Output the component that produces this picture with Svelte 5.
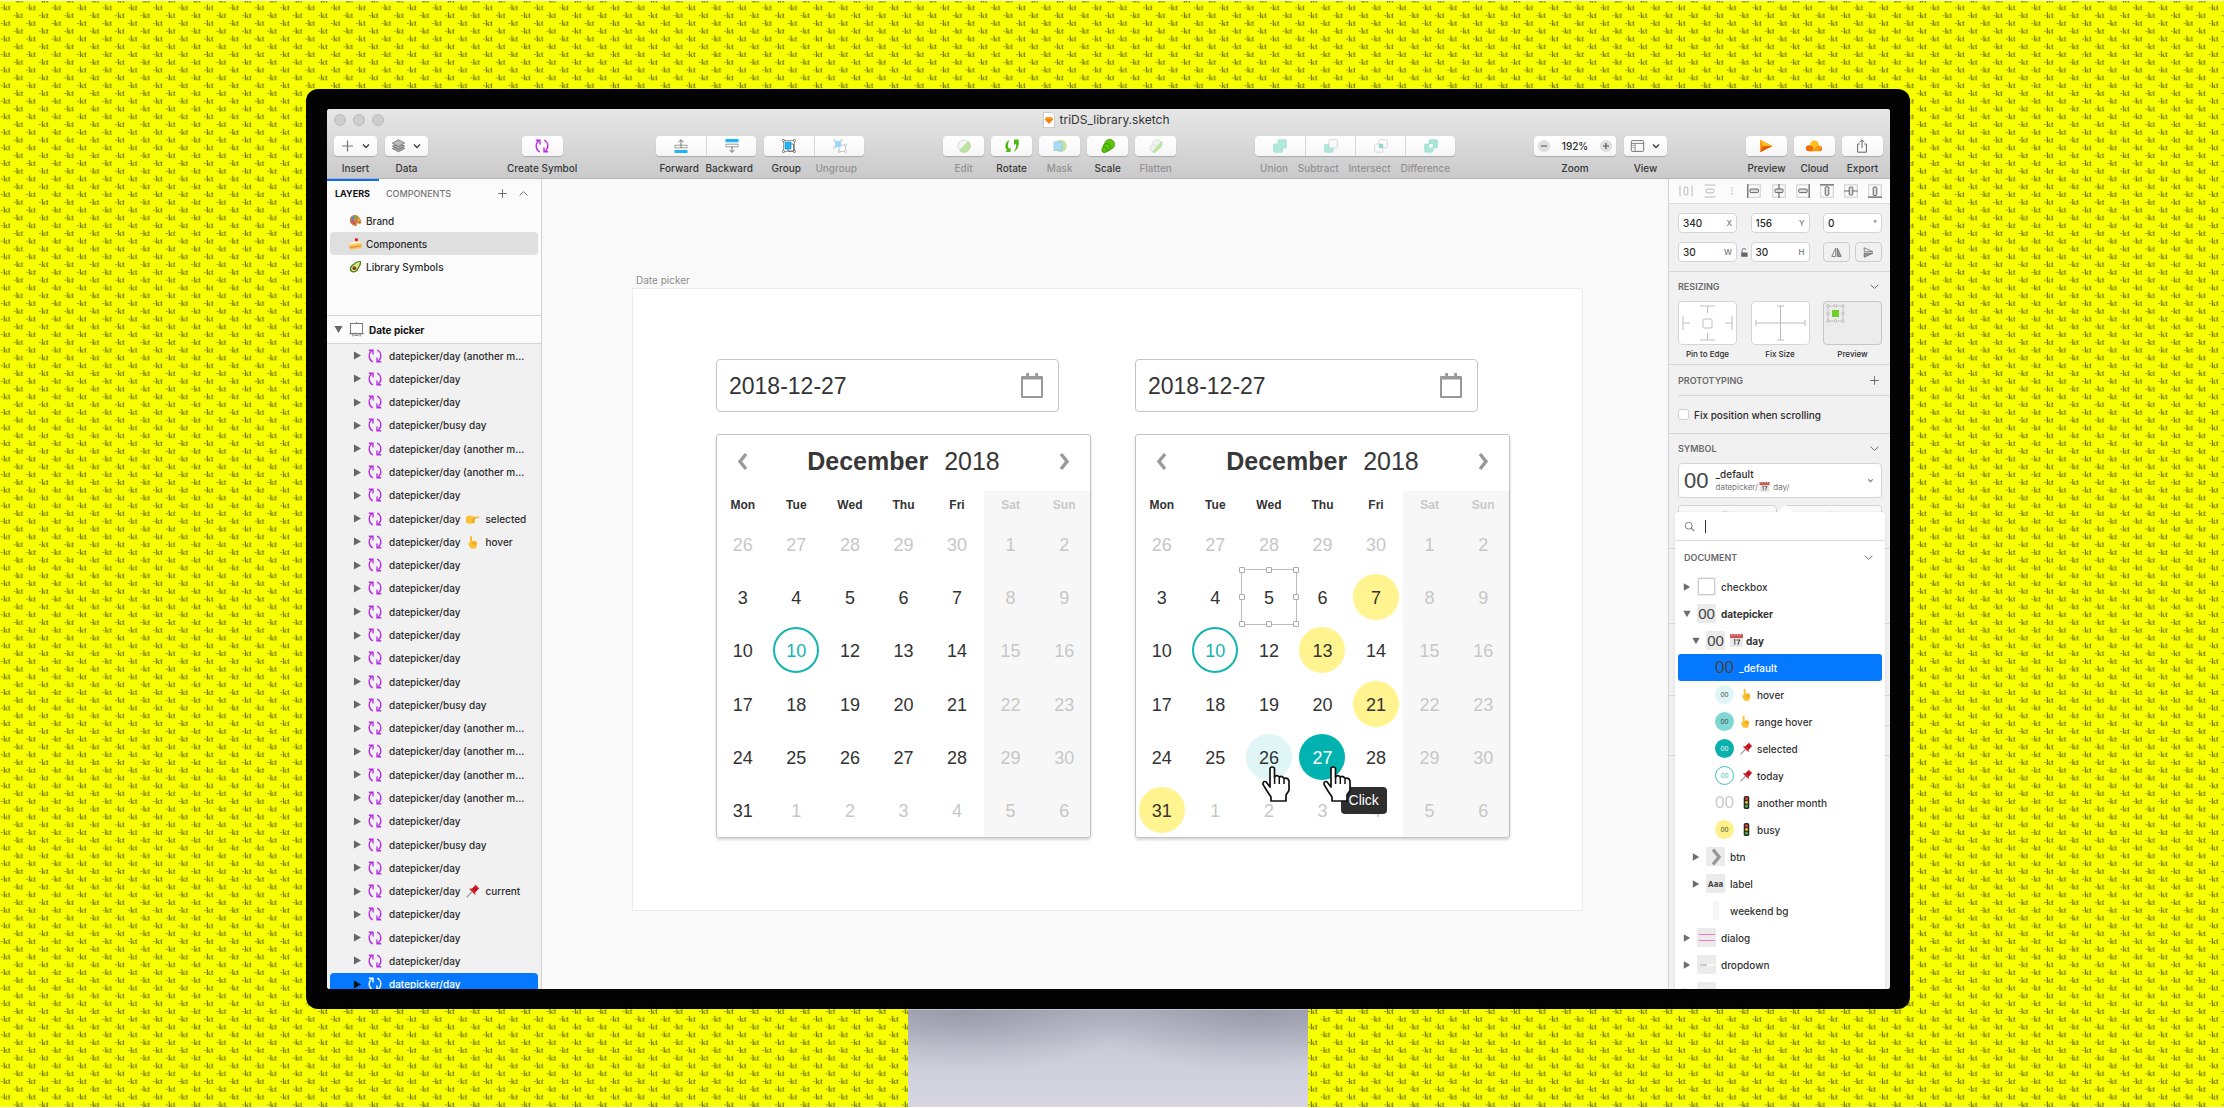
<script>
  const sync =
    '<path d="M4.8 13C.4 10.6 0 4.8 3.8 1.8M.8 1.3H5V5.4M9.200 1C13.600 3.400 14 9.200 10.200 12.200M13.200 12.700H9V8.600" fill="none" stroke="currentColor" stroke-width="1.4"/>';

  const icons = {
    plus: '<path d="M7 1.5V12.5M1.5 7H12.5" fill="none" stroke="currentColor" stroke-width="1.2"/>',
    minus: '<path d="M3.5 7H10.5" fill="none" stroke="currentColor" stroke-width="1.4"/>',
    plusSmall: '<path d="M3.5 7H10.5M7 3.5V10.5" fill="none" stroke="currentColor" stroke-width="1.4"/>',
    down: '<path d="M3.5 5.2L7 8.8L10.5 5.2" fill="none" stroke="currentColor" stroke-width="1.7"/>',
    chevron: '<path d="M2 4.8L7 9.4L12 4.8" fill="none" stroke="currentColor" stroke-width="1.2"/>',
    up: '<path d="M2 9.4L7 4.8L12 9.4" fill="none" stroke="currentColor" stroke-width="1.2"/>',
    right: '<path d="M2.5 1.8L11.5 7L2.500 12.2Z" fill="currentColor"/>',
    open: '<path d="M1.8 2.5H12.2L7 11.500Z" fill="currentColor"/>',
    layers:
      '<g fill="#a5a5a5" stroke="#707070" stroke-width=".8"><path d="M7 6.5L13.2 9.6L7 12.8L.8 9.6Z"/><path d="M7 4L13.2 7.1L7 10.3L.8 7.1Z"/><path d="M7 .8L13.2 4.1L7 7.4L.8 4.1Z" fill="#bbb"/></g>',
    sync,
    forward:
      '<path d="M0.5 11h13v3h-13z" fill="#21b3f3"/><path d="M1 6.2h12v2.6H1z" fill="#fff" stroke="#888" stroke-width=".8"/><path d="M7 9V1M4.5 3.2L7 .6L9.5 3.2" fill="none" stroke="#666" stroke-width=".9"/>',
    backward:
      '<path d="M0.5 0h13v3.2h-13z" fill="#21b3f3"/><path d="M1 5.2h12v2.6H1z" fill="#fff" stroke="#888" stroke-width=".8"/><path d="M7 7.5V13M4.5 11L7 13.5L9.5 11" fill="none" stroke="#666" stroke-width=".9"/>',
    group:
      '<path d="M1.5 1.5h11v11h-11z" fill="none" stroke="#777" stroke-width=".7"/><path d="M6 5h5.5v7H6z" fill="#fff" stroke="#555" stroke-width=".8"/><path d="M3 3h6v7H3z" fill="#21b3f3" stroke="#0c86c4" stroke-width=".6"/><g fill="#fff" stroke="#555" stroke-width=".8"><circle cx="1.5" cy="1.5" r="1.1"/><circle cx="12.5" cy="1.5" r="1.1"/><circle cx="1.5" cy="12.5" r="1.1"/><circle cx="12.5" cy="12.5" r="1.1"/></g>',
    ungroup:
      '<g opacity=".45"><path d="M6 6h6.5v6.5H6z" fill="none" stroke="#777" stroke-width=".8"/><path d="M2 2h6v6H2z" fill="#21b3f3"/><g fill="#fff" stroke="#777" stroke-width=".8"><circle cx="1.5" cy="1.5" r="1"/><circle cx="8.5" cy="1.5" r="1"/><circle cx="1.5" cy="8.5" r="1"/><circle cx="12.5" cy="6" r="1"/><circle cx="12.5" cy="12.5" r="1"/><circle cx="6" cy="12.5" r="1"/></g></g>',
    edit: '<circle cx="7" cy="7" r="6" fill="#f4f4f4" stroke="#d2d2d2" stroke-width=".8"/><path d="M11.4 2.6A6.2 6.2 0 0 1 2.6 11.4Z" fill="#bfe6a3" stroke="#a7d289" stroke-width=".7"/>',
    rotate:
      '<path d="M4.6 1.2C.4 2.2-1 8.2 2 11L.6 13H5.6V8.6L4.2 9.8C2.2 8 2.6 4 4.6 1.2Z" fill="#4fb812"/><path d="M9 .6H13.4C14.6 5 13.4 10 8.8 13C11.2 9.4 11.4 7 11 5L9 5.8Z" fill="#4fb812"/>',
    mask: '<circle cx="7.6" cy="7" r="6.2" fill="#c4e4a4"/><path d="M1 3h8v8.4H1z" fill="#aadcf8" stroke="#8ac4ea" stroke-width=".7"/>',
    scale:
      '<g fill="#5cc705" stroke="#318c03" stroke-width=".8"><circle cx="8.6" cy="5.4" r="4.9"/><circle cx="5.8" cy="8.4" r="3.9"/><circle cx="3.4" cy="11" r="2.6"/></g>',
    flatten:
      '<circle cx="8" cy="5" r="4.3" fill="#f2f2f2" stroke="#d8d8d8" stroke-width=".8"/><circle cx="4.4" cy="9" r="3.4" fill="#f2f2f2" stroke="#d8d8d8" stroke-width=".8"/><path d="M3.6 13L12.6 2.4C14 5 12.6 7.4 10.6 9.4L7.4 12.4C6.2 13.6 4.6 13.8 3.6 13Z" fill="#bfe6a3" stroke="#a9d58c" stroke-width=".6"/>',
    union:
      '<path d="M6 .7h6.5q.9 0 .9.9V8q0 1-1 1H9.5v3.3q0 1-1 1H1.6q-1 0-1-1V6q0-1 1-1H5V1.7q0-1 1-1Z" fill="#b2e8db" stroke="#98dccb" stroke-width=".6"/>',
    subtract:
      '<path d="M.6 5.6h4.2V9h4.4v3.3q0 1-1 1H1.6q-1 0-1-1Z" fill="#b2e8db" stroke="#98dccb" stroke-width=".6"/><rect x="5" y=".7" width="8.4" height="8.2" rx="1" fill="#fafafa" stroke="#d2d2d2" stroke-width=".9"/>',
    intersect:
      '<rect x="5" y=".7" width="8.4" height="8.2" rx="1" fill="none" stroke="#d6d6d6" stroke-width=".9"/><rect x=".6" y="5" width="8.4" height="8.2" rx="1" fill="none" stroke="#d6d6d6" stroke-width=".9"/><path d="M5 5h4v4H5z" fill="#8fdcca"/>',
    difference:
      '<rect x="5" y=".7" width="8.4" height="8.2" rx="1" fill="#a9e4d6" stroke="#98dccb" stroke-width=".6"/><rect x=".6" y="5" width="8.4" height="8.2" rx="1" fill="#a9e4d6" stroke="#98dccb" stroke-width=".6"/><path d="M5.2 5.2h3.6v3.6H5.2z" fill="#fbfbfb"/>',
    view: '<rect x=".8" y="1.6" width="12.4" height="10.8" rx=".8" fill="none" stroke="#777" stroke-width="1"/><path d="M.8 4.4H13.2M4.6 4.4V12.4M2 6.4H3.4M2 8.4H3.4" fill="none" stroke="#777" stroke-width=".9"/>',
    preview:
      '<path d="M1.2 .8L13.4 7L1.2 13.2Z" fill="#f58b0a"/><path d="M1.2 .8L13.4 7L4 7.2Z" fill="#fdbb1c"/><path d="M1.2 13.2L13.4 7L4 7.2Z" fill="#e35d08"/>',
    cloud:
      '<ellipse cx="7.4" cy="6.4" rx="4.4" ry="5" fill="#fdc01f"/><path d="M-1.200 9.4C-1.200 6.800 1 5.800 3.200 6.400C5.800 6.600 7 9 6.600 12.200H1.800C-.2 12.200-1.200 11-1.200 9.400Z" fill="#ef6c0b"/><path d="M2 12.200C5.200 11.800 8 10 8.400 8.400C9.800 6.200 13 6 14.400 7.600C15.800 9.800 14.800 12.200 12.400 12.200Z" fill="#f79a12"/><path d="M12 12.2c2.600 0 3.800-2.600 2.400-4.600c.2 2-.6 3.600-2.400 4.600Z" fill="#de4f07"/>',
    export:
      '<path d="M4.6 5H2.6V13.2H11.4V5H9.4" fill="none" stroke="#666" stroke-width="1"/><path d="M7 9V1M4.6 3.2L7 .8L9.4 3.2" fill="none" stroke="#666" stroke-width="1"/>',
    artboard:
      '<rect x="1.4" y="1.4" width="11.2" height="9.2" fill="#fff" stroke="#777" stroke-width=".9"/><path d="M7 0V1.4M.2 11H13.8M3.6 11V13.4M10.4 11V13.4M5 12.4H9" fill="none" stroke="#777" stroke-width=".9"/>',
    palette:
      '<path d="M1 5C2 1 7 0 10 2.6C13 5 14 9 12.4 10.4C11 11.4 10 9.6 8.8 10C7.6 10.6 9.4 12.6 8 13C4 13 0 9.4 1 5Z" fill="#c98344"/><circle cx="4" cy="4.2" r="1.4" fill="#2d8de0"/><circle cx="7.6" cy="3.6" r="1.3" fill="#51b848"/><circle cx="10.4" cy="6.2" r="1.2" fill="#f4c51e"/><circle cx="3.6" cy="7.4" r="1.3" fill="#9a45c4"/><circle cx="5.4" cy="10" r="1.2" fill="#e0392f"/>',
    cake: '<path d="M.6 6.600L10 3.600L13.400 6.200V12L.6 13.600Z" fill="#f6c667"/><path d="M.6 6.600L10 3.200L13.400 6.200L.6 8.400Z" fill="#fff1d2"/><path d="M.6 10.200L13.400 8.800V10.400L.6 12Z" fill="#e89a2b"/><circle cx="8" cy="3" r="1.8" fill="#d8232a"/>',
    avocado:
      '<path d="M12.8 1C8.600 .6 6.800 2.600 4 4.600C.6 7 0 10.400 2 12.400C4.400 14.400 8.800 13.400 10.200 9.800C11.400 6.600 13.800 5.400 12.800 1Z" fill="#4c7a1f"/><path d="M11.600 2C8.800 2.200 7.200 4 5 5.600C2.200 7.400 1.600 10 3.200 11.400C5 12.800 8 11.800 9 9.200C10 6.400 12 5 11.600 2Z" fill="#e4ea8b"/><circle cx="5.800" cy="8.800" r="2.100" fill="#7a4219"/>',
    pointRight:
      '<path d="M0 5.4C2 3.4 4.6 3 6.2 4.4H13Q14 5.2 13 6.2H8.6V10.4Q7.6 12 5.6 11.4H3.4Q2 11.4 0 10.4Z" fill="#fcbf31"/><path d="M6 8h3M6 9.8h2.8M7 6.3h3" stroke="#d98d12" stroke-width=".7"/>',
    pointUp:
      '<path d="M4 1.200Q5 .2 6 1.200V6Q9 5.200 11 7V10Q10.400 12.600 9.400 13.600H4.800Q3.600 11.600 2.400 9.600V8Q3 7 4 8Z" fill="#fcbf31"/><path d="M7.4 7v2.4M9.2 7.2v2.4" stroke="#d98d12" stroke-width=".7"/>',
    pin: '<path d="M.6 13.4L6 7.6" stroke="#8c9298" stroke-width="1.1"/><path d="M9.4 .6L13.4 4.6L11.8 5.4L9.6 7.8L9.2 11L3 4.8L6.2 4.4L8.6 2.2Z" fill="#dc2430"/><path d="M8.6 2.2L11.8 5.4L9.6 7.8L6.2 4.4Z" fill="#b3141f"/>',
    light:
      '<rect x="4" y="0" width="6" height="14" rx="2" fill="#2b2b2b"/><circle cx="7" cy="3" r="1.6" fill="#ef4136"/><circle cx="7" cy="7" r="1.6" fill="#f7b924"/><circle cx="7" cy="11" r="1.6" fill="#42b549"/>',
    lock: '<path d="M3 7H12V13H3Z" fill="#666"/><path d="M4.4 7V4Q4.6 1.4 7 1.4T9.6 3.6" fill="none" stroke="#666" stroke-width="1.2"/>',
    flipH: '<path d="M6 1.5V12H1Z" fill="none" stroke="#666" stroke-width="1"/><path d="M8 1.5V12H13Z" fill="#999" stroke="#666" stroke-width="1"/>',
    flipV: '<path d="M1.5 6V1L12.5 6Z" fill="none" stroke="#666" stroke-width="1"/><path d="M1.5 8V13L12.5 8Z" fill="#999" stroke="#666" stroke-width="1"/>',
    search: '<circle cx="6" cy="6" r="4.4" fill="none" stroke="currentColor" stroke-width="1.2"/><path d="M9.2 9.2L13 13" stroke="currentColor" stroke-width="1.4"/>',
    prev: '<path d="M10 -.5L4 7L10 14.500" fill="none" stroke="currentColor" stroke-width="3.400"/>',
    next: '<path d="M4 -.5L10 7L4 14.500" fill="none" stroke="currentColor" stroke-width="3.400"/>',
    distH: '<path d="M1 1.5V12.5M13 1.5V12.5" stroke="#bbb"/><rect x="5.2" y="3" width="3.6" height="8" rx="1" fill="none" stroke="#bbb"/>',
    distV: '<path d="M1.5 1H12.5M1.5 13H12.5" stroke="#bbb"/><rect x="3" y="5.2" width="8" height="3.6" rx="1" fill="none" stroke="#bbb"/>',
    dots: '<path d="M7 2V12" stroke="#888" stroke-width="1.4" stroke-dasharray="1.4 2.6"/>',
    alignL: '<rect x=".8" y=".8" width="12.4" height="12.4" fill="none" stroke="#ccc"/><path d="M.8 0V14" stroke="#666" stroke-width="1.2"/><rect x="3" y="5" width="8.4" height="3.6" rx=".8" fill="#ddd" stroke="#666"/>',
    alignC: '<rect x=".8" y=".8" width="12.4" height="12.4" fill="none" stroke="#ccc"/><path d="M7 0V14" stroke="#666" stroke-width="1.2"/><rect x="3" y="5" width="8" height="3.6" rx=".8" fill="#ddd" stroke="#666"/>',
    alignR: '<rect x=".8" y=".8" width="12.4" height="12.4" fill="none" stroke="#ccc"/><path d="M13.2 0V14" stroke="#666" stroke-width="1.2"/><rect x="2.8" y="5" width="8.4" height="3.6" rx=".8" fill="#ddd" stroke="#666"/>',
    alignT: '<rect x=".8" y=".8" width="12.4" height="12.4" fill="none" stroke="#ccc"/><path d="M0 .8H14" stroke="#666" stroke-width="1.2"/><rect x="5.2" y="2.8" width="3.6" height="8.4" rx=".8" fill="#ddd" stroke="#666"/>',
    alignM: '<rect x=".8" y=".8" width="12.4" height="12.4" fill="none" stroke="#ccc"/><path d="M0 7H14" stroke="#666" stroke-width="1.2"/><rect x="5.2" y="3" width="3.6" height="8" rx=".8" fill="#ddd" stroke="#666"/>',
    alignB: '<rect x=".8" y=".8" width="12.4" height="12.4" fill="none" stroke="#ccc"/><path d="M0 13.2H14" stroke="#666" stroke-width="1.2"/><rect x="5.2" y="3" width="3.6" height="8.4" rx=".8" fill="#ddd" stroke="#666"/>',
    detach: '<path d="M2 3L5 9M5 3L2 9M7 10Q8 4 10 4T12 7" fill="none" stroke="#777" stroke-width="1.1"/>',
    master: '<path d="M2 4H7M7 4L2 10M5 4V8M9 4L12 9" fill="none" stroke="#777" stroke-width="1.1"/>',
    doc: '<path d="M1.500 -.5H9.400L12.500 2.600V14.500H1.500Z" fill="#fff" stroke="#bbb" stroke-width=".7"/><path d="M4.200 4H9.800L11.200 6.200L7 10.800L2.800 6.200Z" fill="#f9a01b"/><path d="M2.800 6.200H11.200L7 10.800Z" fill="#f47b0c"/>',
    cal: '<rect x="0" y="1" width="14" height="13" fill="#e9e9ea"/><path d="M0 0H14V4.4H0Z" fill="#c8564f"/><path d="M2 0V2M5 0V2M8 0V2M11 0V2" stroke="#efdcda" stroke-width=".8"/><path d="M4 6.6L5.2 6V11.6M7 6.4H10.4L8.4 11.6" fill="none" stroke="#444" stroke-width="1.1"/>',
    calendar: '<path d="M1 4H21V24H1Z" fill="none" stroke="#999" stroke-width="2" stroke-linejoin="round"/><path d="M1 3H21V6.500H1ZM5.200 0H8V4H5.200ZM14.200 0H17V4H14.200Z" fill="#999"/>',
    hand: '<path d="M8 21V3Q8 1 10.2 1T12.5 3V11Q15 8.4 17.2 11Q20 9.4 22 12.4Q26 11.4 27 15V24.5L24 29V35H9V31L5 25L1 18.4Q.8 14.6 4 15.8Z" fill="#fff" stroke="#111" stroke-width="1.7" stroke-linejoin="round"/><path d="M12.6 10V18M17.3 11V18M22 12.6V18" stroke="#111" stroke-width="1.5"/>'
  };

  const toolbar = [
    [
      { seg: [{ icon: 'plus', menu: true, label: 'Insert' }] },
      { seg: [{ icon: 'layers', menu: true, label: 'Data' }] }
    ],
    [{ seg: [{ icon: 'sync', label: 'Create Symbol', tint: true }] }],
    [
      { wide: true, seg: [{ icon: 'forward', label: 'Forward' }, { icon: 'backward', label: 'Backward' }] },
      { wide: true, seg: [{ icon: 'group', label: 'Group' }, { icon: 'ungroup', label: 'Ungroup', off: true }] }
    ],
    [
      { seg: [{ icon: 'edit', label: 'Edit', off: true }] },
      { seg: [{ icon: 'rotate', label: 'Rotate' }] },
      { seg: [{ icon: 'mask', label: 'Mask', off: true }] },
      { seg: [{ icon: 'scale', label: 'Scale' }] },
      { seg: [{ icon: 'flatten', label: 'Flatten', off: true }] }
    ],
    [
      {
        wide: true,
        seg: [
          { icon: 'union', label: 'Union', off: true },
          { icon: 'subtract', label: 'Subtract', off: true },
          { icon: 'intersect', label: 'Intersect', off: true },
          { icon: 'difference', label: 'Difference', off: true }
        ]
      }
    ],
    [{ zoom: true }, { seg: [{ icon: 'view', menu: true, label: 'View' }] }],
    [
      { seg: [{ icon: 'preview', label: 'Preview' }] },
      { seg: [{ icon: 'cloud', label: 'Cloud' }] },
      { seg: [{ icon: 'export', label: 'Export' }] }
    ]
  ];

  const pages = [
    { icon: 'palette', name: 'Brand' },
    { icon: 'cake', name: 'Components', current: true },
    { icon: 'avocado', name: 'Library Symbols' }
  ];

  const day = { name: 'datepicker/day' };
  const other = { name: 'datepicker/day (another m...' };
  const busy = { name: 'datepicker/busy day' };
  const layers = [
    other, day, day, busy, other, other, day,
    { ...day, icon: 'pointRight', state: 'selected' },
    { ...day, icon: 'pointUp', state: 'hover' },
    day, day, day, day, day, day, busy,
    other, other, other, other, day, busy, day,
    { ...day, icon: 'pin', state: 'current' },
    day, day, day,
    { ...day, active: true }
  ];

  const weekdays = ['Mon', 'Tue', 'Wed', 'Thu', 'Fri', 'Sat', 'Sun'];
  const weeks = [
    [26, 27, 28, 29, 30, 1, 2],
    [3, 4, 5, 6, 7, 8, 9],
    [10, 10, 12, 13, 14, 15, 16],
    [17, 18, 19, 20, 21, 22, 23],
    [24, 25, 26, 27, 28, 29, 30],
    [31, 1, 2, 3, 4, 5, 6]
  ];
  const pickers = [
    { id: 'plain', marks: { '2-1': 'today' } },
    {
      id: 'marked',
      marks: { '2-1': 'today', '1-4': 'busy', '2-3': 'busy', '3-4': 'busy', '5-0': 'busy', '4-2': 'hover', '4-3': 'chosen' },
      selection: '1-2'
    }
  ];
  const muted = (w, d) => d > 4 || w === 0 || (w === 5 && d > 0);

  const aligns = ['distH', 'distV', 'dots', 'alignL', 'alignC', 'alignR', 'alignT', 'alignM', 'alignB'];

  const symbols = [
    { level: 0, arrow: 'right', thumb: 'box', name: 'checkbox' },
    { level: 0, arrow: 'open', thumb: 'digits', name: 'datepicker', bold: true },
    { level: 1, arrow: 'open', thumb: 'digits', icon: 'cal', name: 'day', bold: true },
    { level: 2, thumb: 'digits bare', name: '_default', active: true },
    { level: 2, thumb: 'dot pale', icon: 'pointUp', name: 'hover', spaced: true },
    { level: 2, thumb: 'dot mid', icon: 'pointUp', name: 'range hover' },
    { level: 2, thumb: 'dot full', icon: 'pin', name: 'selected', spaced: true },
    { level: 2, thumb: 'dot ring', icon: 'pin', name: 'today', spaced: true },
    { level: 2, thumb: 'digits bare faint', icon: 'light', name: 'another month', spaced: true },
    { level: 2, thumb: 'dot sun', icon: 'light', name: 'busy', spaced: true },
    { level: 1, arrow: 'right', thumb: 'next', name: 'btn' },
    { level: 1, arrow: 'right', thumb: 'text', name: 'label' },
    { level: 1, thumb: 'strip', name: 'weekend bg' },
    { level: 0, arrow: 'right', thumb: 'lines', name: 'dialog' },
    { level: 0, arrow: 'right', thumb: 'dash', name: 'dropdown' },
    { level: 0, arrow: 'right', thumb: 'dash', name: '' }
  ];
</script>

{#snippet glyph(name, cls = '', box = '0 0 14 14')}
  <svg class="glyph {cls}" viewBox={box} aria-hidden="true">{@html icons[name]}</svg>
{/snippet}

<div class="stage">
  <svg class="wall" aria-hidden="true">
    <defs>
      <pattern id="kt" y="2.5" width="25.38" height="15.56" patternUnits="userSpaceOnUse">
        <text x="0.6" y="6.6">-kt</text>
        <text x="13.3" y="14.4">-kt</text>
      </pattern>
    </defs>
    <rect width="100%" height="100%" fill="#f8ff00" />
    <rect width="100%" height="100%" fill="url(#kt)" />
  </svg>

  <div class="monitor">
    <div class="screen">
      <header class="toolbar">
        <div class="titlebar">
          <div class="lights"><i></i><i></i><i></i></div>
          <div class="title">{@render glyph('doc')}<span>triDS_library.sketch</span></div>
        </div>
        <div class="tools">
          {#each toolbar as cluster}
            <div class="cluster">
              {#each cluster as tool}
                {#if tool.zoom}
                  <div class="tool">
                    <div class="seg zoom">
                      <button aria-label="Zoom out">{@render glyph('minus', 'round')}</button>
                      <span class="value">192%</span>
                      <button aria-label="Zoom in">{@render glyph('plusSmall', 'round')}</button>
                    </div>
                    <div class="caps"><span>Zoom</span></div>
                  </div>
                {:else}
                  <div class="tool">
                    <div class="seg" class:wide={tool.wide}>
                      {#each tool.seg as b}
                        <button class:menu={b.menu} class:tint={b.tint} aria-label={b.label} disabled={b.off}>
                          {@render glyph(b.icon)}
                          {#if b.menu}{@render glyph('down', 'arrow')}{/if}
                        </button>
                      {/each}
                    </div>
                    <div class="caps">
                      {#each tool.seg as b}<span class:off={b.off}>{b.label}</span>{/each}
                    </div>
                  </div>
                {/if}
              {/each}
            </div>
          {/each}
        </div>
      </header>

      <div class="workspace">
        <aside class="sidebar">
          <div class="track"><div class="progress"></div></div>
          <div class="tabs">
            <button class="tab on">LAYERS</button>
            <button class="tab">COMPONENTS</button>
            <span class="grow"></span>
            <button aria-label="Add page">{@render glyph('plus', 'small')}</button>
            <button aria-label="Collapse pages">{@render glyph('up', 'small')}</button>
          </div>
          <ul class="pages">
            {#each pages as p}
              <li class:current={p.current}>{@render glyph(p.icon)}<span>{p.name}</span></li>
            {/each}
          </ul>
          <div class="board">
            {@render glyph('open', 'tri')}{@render glyph('artboard', 'frame')}<span>Date picker</span>
          </div>
          <ul class="layers">
            {#each layers as l}
              <li class:active={l.active}>
                {@render glyph('right', 'tri')}{@render glyph('sync', 'sync')}
                <span>{l.name}</span>
                {#if l.icon}{@render glyph(l.icon, 'emoji')}<span>{l.state}</span>{/if}
              </li>
            {/each}
          </ul>
        </aside>

        <main class="canvas">
          <h1>Date picker</h1>
          <div class="artboard">
            {#each pickers as p}
              <section class="picker">
                <div class="field">
                  <input type="text" value="2018-12-27" aria-label="Date, {p.id}" />
                  {@render glyph('calendar', 'calendar', '0 0 22 25')}
                </div>
                <div class="month">
                  <div class="head">
                    <button aria-label="Previous month">{@render glyph('prev')}</button>
                    <h2>December <span>2018</span></h2>
                    <button aria-label="Next month">{@render glyph('next')}</button>
                  </div>
                  <table>
                    <thead>
                      <tr>{#each weekdays as d, i}<th class:weekend={i > 4}>{d}</th>{/each}</tr>
                    </thead>
                    <tbody>
                      {#each weeks as week, w}
                        <tr>
                          {#each week as d, i}
                            {@const mark = p.marks[`${w}-${i}`]}
                            <td class:weekend={i > 4} class:muted={muted(w, i)}>
                              <span class="day {mark ?? ''}">{d}</span>
                              {#if p.selection === `${w}-${i}`}
                                <span class="selection">
                                  {#each Array(9) as _, h}<i class:hidden={h === 4}></i>{/each}
                                </span>
                              {/if}
                              {#if mark === 'chosen'}<span class="tip">Click</span>{/if}
                              {#if mark === 'hover' || mark === 'chosen'}
                                {@render glyph('hand', `hand ${mark}-hand`, '0 0 28 36')}
                              {/if}
                            </td>
                          {/each}
                        </tr>
                      {/each}
                    </tbody>
                  </table>
                </div>
              </section>
            {/each}
          </div>
        </main>

        <aside class="inspector">
          <div class="aligns">
            {#each aligns as a}
              {#if a === 'dots'}{@render glyph(a, 'dots')}{:else}<button aria-label={a}>{@render glyph(a)}</button>{/if}
            {/each}
          </div>
          <section class="geometry">
            <label><input value="340" /><span>X</span></label>
            <label><input value="156" /><span>Y</span></label>
            <label><input value="0" /><span>°</span></label>
            <label><input value="30" /><span>W</span></label>
            <label>{@render glyph('lock', 'lock')}<input value="30" /><span>H</span></label>
            <div class="flips">
              <button aria-label="Flip horizontally">{@render glyph('flipH')}</button>
              <button aria-label="Flip vertically">{@render glyph('flipV')}</button>
            </div>
          </section>
          <section class="resizing">
            <div class="caption"><h3>RESIZING</h3>{@render glyph('chevron', 'small')}</div>
            <div class="boxes">
              <figure>
                <svg viewBox="0 0 59 44" aria-hidden="true"><path d="M22 5H37M29.500 5V12M22 39H37M29.500 32V39M5 15V29M5 22H12M54 15V29M47 22H54" /><rect x="25" y="18" width="9" height="9" rx="1" /></svg>
                <figcaption>Pin to Edge</figcaption>
              </figure>
              <figure>
                <svg viewBox="0 0 59 44" aria-hidden="true"><path d="M5 22H54M29.500 5V39M5 19V25M54 19V25M26 5H33M26 39H33" /></svg>
                <figcaption>Fix Size</figcaption>
              </figure>
              <figure class="shown">
                <svg viewBox="0 0 59 44" aria-hidden="true">
                  <path d="M5 5H20V20H5Z" />
                  <rect x="9" y="9" width="7" height="7" class="green" />
                  <g class="knobs"><circle cx="5" cy="5" r="1.300" /><circle cx="12.500" cy="5" r="1.300" /><circle cx="20" cy="5" r="1.300" /><circle cx="5" cy="12.500" r="1.300" /><circle cx="20" cy="12.500" r="1.300" /><circle cx="5" cy="20" r="1.300" /><circle cx="12.500" cy="20" r="1.300" /><circle cx="20" cy="20" r="1.300" /></g>
                </svg>
                <figcaption>Preview</figcaption>
              </figure>
            </div>
          </section>
          <section class="proto">
            <div class="caption"><h3>PROTOTYPING</h3>{@render glyph('plus', 'small')}</div>
            <label class="check"><input type="checkbox" /><span>Fix position when scrolling</span></label>
          </section>
          <section class="symbol">
            <div class="caption"><h3>SYMBOL</h3>{@render glyph('chevron', 'small')}</div>
            <button class="combo">
              <span class="big">00</span>
              <span class="names"><b>_default</b><small>datepicker/{@render glyph('cal')} day/</small></span>
              {@render glyph('down', 'arrow')}
            </button>
            <div class="pair">
              <button aria-label="Detach symbol">{@render glyph('detach')}</button>
              <button aria-label="Edit master">{@render glyph('master')}</button>
            </div>
          </section>
          <div class="rest"><i></i><i></i><i class="inset"></i><i></i></div>

          <div class="popover">
            <div class="search">{@render glyph('search')}<span class="bar"></span><input type="search" aria-label="Search symbols" /></div>
            <div class="caption"><h3>DOCUMENT</h3>{@render glyph('chevron', 'small')}</div>
            <ul>
              {#each symbols as s}
                <li class="level{s.level}" class:active={s.active} class:bold={s.bold}>
                  <span class="twist">{#if s.arrow}{@render glyph(s.arrow)}{/if}</span>
                  <span class="thumb {s.thumb}">
                    {#if s.thumb.startsWith('digits') || s.thumb.startsWith('dot')}00{:else if s.thumb === 'text'}Aaa{:else if s.thumb === 'next'}{@render glyph('next')}{/if}
                  </span>
                  {#if s.icon}<span class="mark" class:spaced={s.spaced}>{@render glyph(s.icon)}</span>{/if}
                  <span>{s.name}</span>
                </li>
              {/each}
            </ul>
          </div>
        </aside>
      </div>
    </div>
  </div>
  <div class="stand"></div>
</div>

<style>
  :global(*) { box-sizing: border-box; }
  :global(body) { margin: 0; }

  .stage {
    position: relative;
    display: flex;
    flex-direction: column;
    height: 100vh;
    padding: 88px 314px 0 306px;
    font-family: Inter, 'Liberation Sans', sans-serif;
    font-size: 10px;
    font-weight: 500;
    color: #2b2b2b;
    border-top: 1px solid #fdfde8;
    border-bottom: 1px solid #fdfde8;
    overflow: hidden;
  }
  .wall { position: absolute; inset: 0; width: 100%; height: 100%; }
  .wall text { font: bold 8px 'Liberation Serif', serif; fill: #6f7600; }

  button { font: inherit; color: inherit; padding: 0; border: 0; background: none; display: flex; align-items: center; justify-content: center; }
  input { font: inherit; color: inherit; border: 0; outline: 0; background: none; padding: 0; margin: 0; min-width: 0; }
  ul { list-style: none; margin: 0; padding: 0; }
  h1, h2, h3, figure { margin: 0; font-size: inherit; }
  .glyph { width: 14px; height: 14px; flex: none; overflow: visible; }
  .glyph.small { width: 11px; height: 11px; color: #666; }
  .grow { flex: 1; }

  .monitor { position: relative; flex: 1; min-height: 0; display: flex; padding: 20px 20px 20px 21px; background: #030304; border-radius: 12px; }
  .stand {
    position: relative; align-self: center; flex: none; width: 400px; height: 98px;
    border-top: 1px solid #c6c6d2;
    background:
      radial-gradient(180px 60px at 14% 0, rgba(120, 120, 140, .45), transparent),
      radial-gradient(180px 60px at 88% 0, rgba(120, 120, 140, .45), transparent),
      linear-gradient(#b3b4c1, #cacbd6 40%, #d6d7e2);
  }
  .screen { flex: 1; min-width: 0; display: flex; flex-direction: column; overflow: hidden; border-radius: 3px; background: #f9f9f9; }

  .toolbar { flex: none; height: 70px; background: linear-gradient(#e7e7e7, #cacaca); border-bottom: 1px solid #b2b2b2; }
  .titlebar { position: relative; display: flex; align-items: center; justify-content: center; height: 21px; }
  .lights { position: absolute; left: 7px; display: flex; gap: 7px; }
  .lights i { width: 12px; height: 12px; border-radius: 50%; background: #cdcdcd; border: 1px solid #bbb; }
  .title { display: flex; align-items: center; gap: 4px; padding-right: 6px; font-size: 12px; font-weight: 400; color: #333; }
  .tools { display: flex; justify-content: space-between; padding: 6px 7px 0; }
  .cluster { display: flex; gap: 8px; }
  .tool { display: flex; flex-direction: column; align-items: center; gap: 5px; }
  .seg { display: flex; height: 20px; background: linear-gradient(#fff, #f6f6f6); border-radius: 4px; box-shadow: 0 1px 1px rgba(0, 0, 0, .2); }
  .seg button { width: 41px; }
  .seg.wide button { width: 50px; }
  .seg button + button { border-left: 1px solid #d8d8d8; }
  .seg .menu { width: 43px; gap: 5px; }
  .seg .menu .glyph:first-child { width: 15px; color: #777; }
  .seg .arrow { width: 12px; height: 12px; color: #444; }
  .tint { color: #bd2fe6; }
  .seg.zoom { width: 82px; padding: 0 4px; align-items: center; justify-content: space-between; }
  .seg.zoom button { width: 12px; height: 12px; border: 0; border-radius: 50%; background: #dedede; }
  .value { font-size: 10px; }
  .round { width: 12px; height: 12px; color: #555; }
  .caps { display: flex; justify-content: space-around; align-self: stretch; height: 14px; line-height: 14px; font-size: 10px; color: #383838; white-space: nowrap; }
  .caps .off { color: #929292; }
  .cluster:nth-child(4) .tool, .cluster:nth-child(7) .tool { width: 41px; }
  .cluster:nth-child(4), .cluster:nth-child(7) { gap: 7px; }

  .workspace { flex: 1; min-height: 0; display: grid; grid-template-columns: 215px minmax(0, 1fr) 222px; }

  .sidebar { display: flex; flex-direction: column; min-height: 0; background: #f1f1f1; border-right: 1px solid #d2d2d2; }
  .track { flex: none; background: #fbfbfb; }
  .progress { width: 52px; height: 2px; background: #0a6cff; }
  .tabs { display: flex; align-items: center; gap: 10px; height: 28px; padding: 0 12px 3px 8px; background: #fbfbfb; }
  .tab { color: #777; font-size: 9px; margin-right: 6px; }
  .tab.on { color: #111; font-weight: 700; }
  .pages { height: 107px; background: #fbfbfb; border-bottom: 1px solid #d4d4d4; }
  .pages li { display: flex; align-items: center; gap: 4px; height: 23px; margin: 0 3px; padding-left: 19px; border-radius: 4px; }
  .pages .glyph { width: 13px; height: 13px; }
  .pages .current { background: #dfdfdf; }
  .board { display: flex; align-items: center; gap: 5px; flex: none; height: 28px; padding-left: 6px; background: #fbfbfb; border-bottom: 1px solid #d4d4d4; font-weight: 700; color: #111; }
  .tri { width: 11px; height: 11px; color: #666; }
  .frame { width: 15px; height: 15px; }
  .layers { flex: 1; display: flex; flex-direction: column; min-height: 0; margin-bottom: -7px; }
  .layers li { flex: 1; display: flex; align-items: center; margin: 0 3px; padding-left: 22px; white-space: nowrap; }
  .layers .sync { width: 14px; color: #b62fe0; margin: 0 7px 0 5px; }
  .layers .emoji { margin: 0 5px 0 6px; width: 14px; height: 14px; }
  .layers .active { background: #0479ff; color: #fff; border-radius: 4px 4px 0 0; }
  .active .sync { color: #fff; }
  .active .tri { color: #111; }

  .canvas { display: flex; flex-direction: column; padding: 93px 85px 78px 90px; background: #f9f9f9; }
  .canvas h1 { height: 16px; line-height: 16px; padding-left: 4px; font-weight: 400; color: #8d8d8d; }
  .artboard { flex: 1; display: flex; gap: 44px; padding: 70px 72px 0 83px; background: #fff; border: 1px solid #ececec; font-family: 'Liberation Sans', Arial, sans-serif; font-weight: 400; color: #333; }
  .picker { flex: 1; min-width: 0; display: flex; flex-direction: column; gap: 22px; }
  .field { display: flex; align-items: center; height: 53px; margin-right: 32px; padding: 0 15px 0 12px; border: 1px solid #c4c4c4; border-radius: 4px; }
  .field input { flex: 1; padding-top: 2px; font-size: 23px; }
  .calendar { width: 22px; height: 25px; }
  .month { border: 1px solid #c4c4c4; border-radius: 3px; box-shadow: 0 2px 3px rgba(0, 0, 0, .16); }
  .head { display: flex; align-items: center; justify-content: space-between; height: 56px; padding: 0 19px 4px; color: #999; }
  .head .glyph { height: 15px; }
  .head h2 { display: flex; gap: 16px; font-size: 25px; color: #383838; }
  .head span { font-weight: 400; }
  table { width: calc(100% + 2px); height: 346px; margin: 0 -1px; table-layout: fixed; border-collapse: collapse; }
  th, td { padding: 0; text-align: center; }
  th { height: 26px; padding-top: 2px; font-size: 12px; }
  td { position: relative; font-size: 18px; }
  .weekend { background: rgba(0, 0, 0, .03); color: #c9c9c9; }
  .muted { color: #c7c7c7; }
  .day { display: flex; align-items: center; justify-content: center; width: 46px; height: 46px; margin: 0 auto; padding-top: 3px; border-radius: 50%; }
  .today { border: 2px solid #14b4b0; color: #14b4b0; }
  .busy { background: #fff48f; }
  .hover { background: #e0f6f6; }
  .chosen { background: #00b3b0; color: #fff; }
  .selection { position: absolute; inset: -3px; display: grid; grid-template-columns: repeat(3, 6px); grid-template-rows: repeat(3, 6px); place-content: space-between; }
  .selection::before { content: ''; position: absolute; inset: 2px; border: 1px solid #bdbdbd; }
  .selection i { position: relative; background: #fff; border: 1px solid #aaa; border-radius: 1px; }
  .selection .hidden { visibility: hidden; }
  td :global(.hand) { position: absolute; z-index: 2; top: 36px; left: 20px; width: 28px; height: 36px; }
  td :global(.chosen-hand) { left: 27px; }
  .tip { position: absolute; z-index: 1; left: 45px; top: 57px; width: 46px; height: 27px; line-height: 27px; font-size: 14px; color: #fff; background: #2e2e2e; border-radius: 4px; }

  .inspector { position: relative; min-height: 0; overflow: hidden; background: #f1f1f1; border-left: 1px solid #d2d2d2; }
  .aligns { display: flex; align-items: center; justify-content: space-between; height: 25px; padding: 0 8px 0 10px; background: #fbfbfb; border-bottom: 1px solid #dadada; }
  .aligns .dots { width: 10px; }
  section:not(.picker) { border-bottom: 1px solid #d6d6d6; padding: 0 8px 0 9px; }
  .inspector .geometry { display: grid; grid-template-columns: repeat(3, 59px); justify-content: space-between; row-gap: 9px; padding-top: 9px; padding-bottom: 9px; }
  .geometry label { position: relative; display: flex; align-items: center; height: 20px; padding: 0 4px; background: #fff; border: 1px solid #d4d4d4; border-radius: 4px; }
  .geometry input { flex: 1; width: 20px; }
  .geometry label span { font-size: 8px; color: #777; }
  .geometry :global(.lock) { position: absolute; left: -13px; width: 10px; height: 11px; }
  .flips { display: grid; grid-template-columns: 1fr 1fr; gap: 5px; }
  .flips button { border: 1px solid #ccc; border-radius: 4px; }
  .flips .glyph { width: 11px; height: 11px; }
  .caption { display: flex; align-items: center; justify-content: space-between; height: 29px; padding-right: 2px; }
  h3 { font-size: 9px; font-weight: 600; color: #6a6a6a; }
  .boxes { display: flex; justify-content: space-between; height: 63px; }
  figure { width: 59px; text-align: center; }
  figure svg { display: block; width: 59px; height: 44px; background: #fff; border-radius: 4px; outline: 1px solid #d4d4d4; outline-offset: -1px; fill: none; stroke: #bdbdbd; }
  .shown svg { background: #ececec; outline-color: #c6c6c6; stroke: #c6c6c6; }
  .shown .green { fill: #6dd02c; stroke: none; }
  .shown .knobs { fill: #fff; stroke: #aaa; stroke-width: .8; }
  figcaption { font-size: 8px; line-height: 18px; }
  .inspector .proto { padding-right: 0; }
  .proto .caption { height: 31px; padding-right: 10px; border-bottom: 1px solid #d6d6d6; }
  .check { display: flex; align-items: center; gap: 5px; height: 37px; }
  .check input { appearance: none; width: 11px; height: 11px; background: #fff; border: 1px solid #cfcfcf; border-radius: 3px; }
  .combo { width: 100%; height: 35px; padding: 0 6px 0 5px; justify-content: flex-start; background: #fff; border: 1px solid #d4d4d4; border-radius: 4px; text-align: left; }
  .big { font: 22px 'Liberation Sans', sans-serif; color: #444; margin-right: 7px; }
  .names { flex: 1; display: flex; flex-direction: column; line-height: 13px; }
  .names b { font-weight: 500; }
  .names small { display: flex; align-items: center; gap: 1px; font-size: 8px; font-weight: 400; color: #777; white-space: pre; }
  .names .glyph { width: 11px; height: 10px; }
  .combo .arrow { width: 9px; height: 9px; color: #777; }
  .pair { display: grid; grid-template-columns: 1fr 1fr; gap: 6px; margin-top: 7px; }
  .pair button { height: 20px; border: 1px solid #d4d4d4; background: #fafafa; border-radius: 4px; }
  .pair .glyph { width: 12px; height: 12px; }
  .symbol { height: 115px; }
  .rest { display: grid; grid-template-rows: 75px 72px 30px 30px; }
  .rest i { border-bottom: 1px solid #d8d8d8; }
  .rest .inset { margin-left: 9px; }

  .popover { position: absolute; z-index: 1; inset: 333px 5px 0 6px; background: #fff; border-radius: 4px 4px 0 0; box-shadow: 0 0 3px rgba(0, 0, 0, .1); }
  .popover::before { content: ''; position: absolute; top: -5px; left: 50%; width: 10px; height: 10px; background: #fff; rotate: 45deg; }
  .search { display: flex; align-items: center; gap: 10px; height: 29px; padding: 0 9px; border-bottom: 1px solid #dcdcdc; color: #777; }
  .search .glyph { width: 11px; height: 11px; }
  .search .bar { width: 1px; height: 13px; background: #333; }
  .search input { flex: 1; margin-left: -10px; }
  .popover .caption { height: 32px; padding: 0 11px 0 9px; }
  .popover li { display: flex; align-items: center; height: 27px; margin: 0 3px; padding-left: 4px; border-radius: 3px; white-space: nowrap; color: #333; }
  .popover .level1 { padding-left: 13px; }
  .popover .level2 { padding-left: 22px; }
  .popover .active { background: #0479ff; color: #fff; }
  .popover .bold { font-weight: 700; }
  .twist { display: flex; width: 10px; margin-right: 5px; color: #6d6d6d; }
  .twist .glyph { width: 10px; height: 10px; }
  .thumb { display: flex; flex: none; align-items: center; justify-content: center; width: 19px; height: 19px; margin-right: 5px; border-radius: 1px; background: #ebebeb; color: #444; font: 400 15px 'Liberation Sans', sans-serif; }
  .box::before { content: ''; width: 15px; height: 15px; background: #fff; border: 1px solid #ccc; border-radius: 2px; }
  .bare { background: none; font-size: 17px; }
  .faint { color: #ccc; }
  .dot { border-radius: 50%; font-size: 7px; }
  .pale { background: #e0f6f6; }
  .mid { background: #7fd8d4; }
  .full { background: #0ab0ac; color: #fff; }
  .ring { background: #fff; border: 1px solid #45c0bd; color: #45c0bd; }
  .sun { background: #fff08a; }
  .thumb.next { color: #999; }
  .thumb.text { font: 700 8px Inter, sans-serif; }
  .thumb.strip { background: linear-gradient(#f7f7f7, #f7f7f7) center / 6px 100% no-repeat; }
  .lines::before { content: ''; width: 16px; height: 5px; border-top: 1px solid #f07ac4; border-bottom: 1px solid #f07ac4; }
  .dash::before { content: ''; width: 14px; height: 2px; background: linear-gradient(90deg, #ccc 50%, #f8f8f8 50%); }
  .mark { display: flex; margin-right: 3px; }
  .mark .glyph { width: 13px; height: 13px; }
  .mark.spaced { margin: 0 4px 0 1px; }
</style>
